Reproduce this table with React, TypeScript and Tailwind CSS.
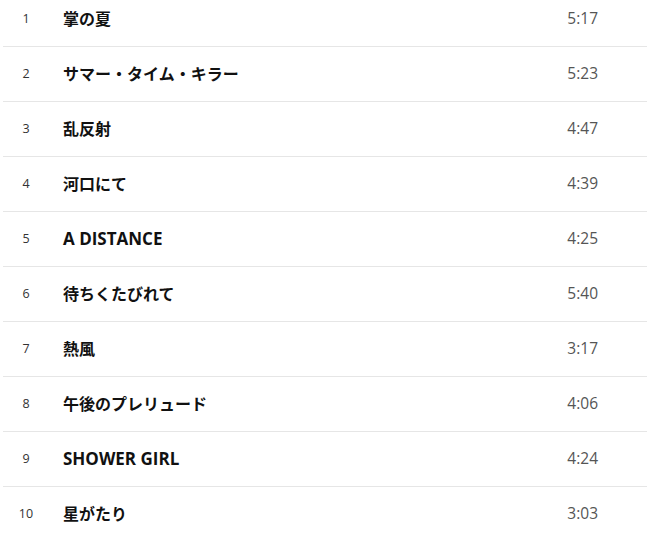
const tracks = [
  { no: 1, title: '掌の夏', time: '5:17' },
  { no: 2, title: 'サマー・タイム・キラー', time: '5:23' },
  { no: 3, title: '乱反射', time: '4:47' },
  { no: 4, title: '河口にて', time: '4:39' },
  { no: 5, title: 'A DISTANCE', time: '4:25', latin: true },
  { no: 6, title: '待ちくたびれて', time: '5:40' },
  { no: 7, title: '熱風', time: '3:17' },
  { no: 8, title: '午後のプレリュード', time: '4:06' },
  { no: 9, title: 'SHOWER GIRL', time: '4:24', latin: true },
  { no: 10, title: '星がたり', time: '3:03' },
];

export default function App() {
  return (
    <div className="h-[536px] w-[647px] overflow-hidden bg-white">
      <ul className="-mt-[8px] ml-[3px]">
        {tracks.map((t) => (
          <li
            key={t.no}
            className="flex h-[55px] items-center border-b border-[#e6e6e6]"
          >
            <span
              className="w-[46px] text-center text-[12.5px] text-[#333]"
              style={{ fontFamily: '"Open Sans", "Noto Sans", sans-serif' }}
            >
              {t.no}
            </span>
            <span
              className={
                t.latin
                  ? 'flex-1 pl-[14px] text-[17px] font-bold text-[#111]'
                  : 'flex-1 pl-[14px] text-[16px] font-bold text-[#111]'
              }
              style={{ fontFamily: '"Open Sans", "Noto Sans CJK JP", sans-serif' }}
            >
              {t.title}
            </span>
            <span
              className="mr-[49px] text-[15.5px] text-[#555]"
              style={{ fontFamily: '"Open Sans", "Noto Sans", sans-serif' }}
            >
              {t.time}
            </span>
          </li>
        ))}
      </ul>
    </div>
  );
}
